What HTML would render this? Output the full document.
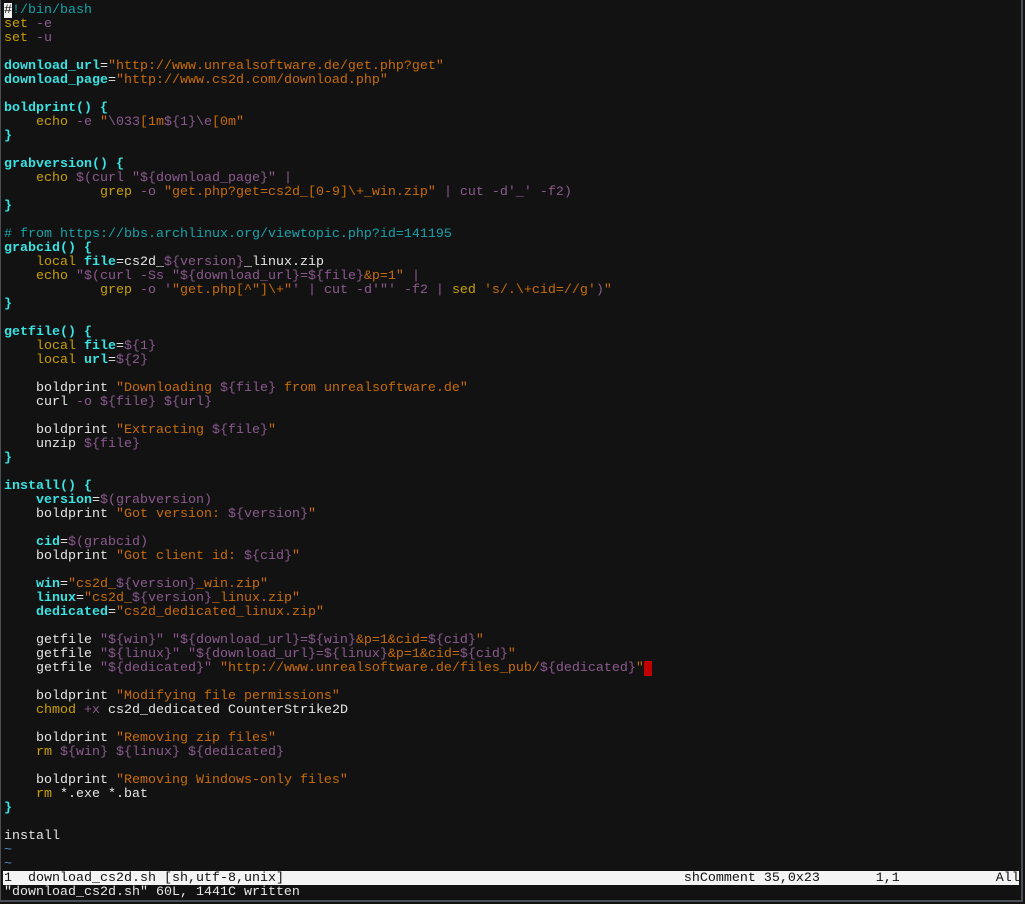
<!DOCTYPE html>
<html><head><meta charset="utf-8"><style>
html,body{margin:0;padding:0;background:#121212;width:1025px;height:904px;overflow:hidden}
.f{position:absolute;left:0;top:0;width:1023px;height:902px;border-left:1px solid #4a4e56;border-right:2px solid #4a4e56;border-bottom:2px solid #4a4e56;box-sizing:border-box}
pre{position:absolute;left:4px;top:4px;margin:0;font-family:"Liberation Mono",monospace;font-size:13.33px;line-height:14px;color:#e6e6e6;white-space:pre}
.c{color:#16a3ab}.k{color:#c9a000}.p{color:#8c5a90}.s{color:#c86c08}.v{color:#3ae2e2;font-weight:bold}.t{color:#5a8fc8}
.cur{background:#f0f0f0;color:#121212}.rc{background:#c00000;color:#c00000}
.st{position:absolute;left:3px;top:871px;width:1016px;height:14px;background:#f4f4f4;overflow:hidden}
.st pre{left:1px;top:1px;color:#111}
.msg{top:886px}
</style></head><body><div class="f"></div>
<pre><span class="cur">#</span><span class="c">!/bin/bash</span>
<span class="k">set</span> <span class="p">-e</span>
<span class="k">set</span> <span class="p">-u</span>

<span class="v">download_url</span>=<span class="s">"http://www.unrealsoftware.de/get.php?get"</span>
<span class="v">download_page</span>=<span class="s">"http://www.cs2d.com/download.php"</span>

<span class="v">boldprint() {</span>
    <span class="k">echo</span> <span class="p">-e</span> <span class="s">"</span><span class="p">\033</span><span class="s">[1m</span><span class="p">${1}\e</span><span class="s">[0m"</span>
<span class="v">}</span>

<span class="v">grabversion() {</span>
    <span class="k">echo</span> <span class="p">$(curl "${download_page}" |</span>
            <span class="k">grep</span> <span class="p">-o</span> <span class="s">"get.php?get=cs2d_[0-9]\+_win.zip"</span> <span class="p">| cut -d'_' -f2)</span>
<span class="v">}</span>

<span class="c"># from https://bbs.archlinux.org/viewtopic.php?id=141195</span>
<span class="v">grabcid() {</span>
    <span class="k">local</span> <span class="v">file</span>=cs2d_<span class="p">${version}</span>_linux.zip
    <span class="k">echo</span> <span class="p">"$(curl -Ss "${download_url}=${file}</span><span class="s">&amp;p=1"</span> <span class="p">|</span>
            <span class="k">grep</span> <span class="p">-o</span> <span class="p">'</span><span class="s">"get.php[^"]\+"</span><span class="p">' | cut -d'"' -f2 |</span> <span class="k">sed</span> <span class="s">'s/.\+cid=//g'</span><span class="p">)</span><span class="s">"</span>
<span class="v">}</span>

<span class="v">getfile() {</span>
    <span class="k">local</span> <span class="v">file</span>=<span class="p">${1}</span>
    <span class="k">local</span> <span class="v">url</span>=<span class="p">${2}</span>

    boldprint <span class="s">"Downloading </span><span class="p">${file}</span><span class="s"> from unrealsoftware.de"</span>
    curl <span class="p">-o ${file} ${url}</span>

    boldprint <span class="s">"Extracting </span><span class="p">${file}</span><span class="s">"</span>
    unzip <span class="p">${file}</span>
<span class="v">}</span>

<span class="v">install() {</span>
    <span class="v">version</span>=<span class="p">$(grabversion)</span>
    boldprint <span class="s">"Got version: </span><span class="p">${version}</span><span class="s">"</span>

    <span class="v">cid</span>=<span class="p">$(grabcid)</span>
    boldprint <span class="s">"Got client id: </span><span class="p">${cid}</span><span class="s">"</span>

    <span class="v">win</span>=<span class="s">"cs2d_</span><span class="p">${version}</span><span class="s">_win.zip"</span>
    <span class="v">linux</span>=<span class="s">"cs2d_</span><span class="p">${version}</span><span class="s">_linux.zip"</span>
    <span class="v">dedicated</span>=<span class="s">"cs2d_dedicated_linux.zip"</span>

    getfile <span class="p">"${win}" "${download_url}=${win}</span><span class="s">&amp;p=1&amp;cid=</span><span class="p">${cid}</span><span class="s">"</span>
    getfile <span class="p">"${linux}" "${download_url}=${linux}</span><span class="s">&amp;p=1&amp;cid=</span><span class="p">${cid}</span><span class="s">"</span>
    getfile <span class="p">"${dedicated}"</span> <span class="s">"http://www.unrealsoftware.de/files_pub/</span><span class="p">${dedicated}</span><span class="s">"</span><span class="rc"> </span>

    boldprint <span class="s">"Modifying file permissions"</span>
    <span class="k">chmod</span> <span class="p">+x</span> cs2d_dedicated CounterStrike2D

    boldprint <span class="s">"Removing zip files"</span>
    <span class="k">rm</span> <span class="p">${win} ${linux} ${dedicated}</span>

    boldprint <span class="s">"Removing Windows-only files"</span>
    <span class="k">rm</span> *.exe *.bat
<span class="v">}</span>

install
<span class="t">~</span>
<span class="t">~</span></pre>
<div class="st"><pre>1  download_cs2d.sh [sh,utf-8,unix]                                                  shComment 35,0x23       1,1            All</pre></div>
<pre class="msg">"download_cs2d.sh" 60L, 1441C written</pre>
</body></html>
